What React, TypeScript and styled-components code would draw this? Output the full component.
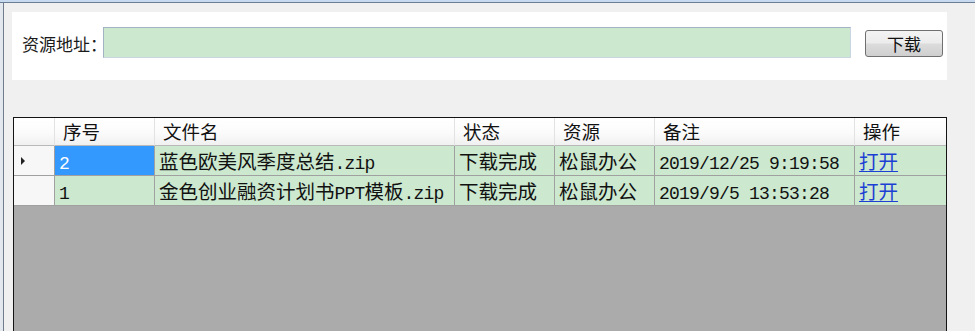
import React from "react";
import styled, { createGlobalStyle } from "styled-components";

const Global = createGlobalStyle`
  html, body { margin: 0; padding: 0; background: #f0f0f0; overflow: hidden; }
  * { box-sizing: border-box; }
`;

const Frame = styled.div`
  width: 975px;
  height: 331px;
  display: flex;
  flex-direction: column;
  background: #f0f0f0;
  overflow: hidden;
`;

const TopEdge = styled.div`
  height: 3px;
  flex: none;
  background: linear-gradient(#c8daf0 0 2px, #6c7d96 2px 3px);
`;

const Body = styled.div`
  flex: 1;
  display: flex;
  min-height: 0;
`;

const SideEdge = styled.div`
  width: 4px;
  flex: none;
  background: linear-gradient(to right, #e3e8ee 0 3px, #6f7c8c 3px 4px);
`;

const Content = styled.div`
  flex: 1;
  display: flex;
  flex-direction: column;
  padding: 9px 29px 0 8px;
  min-height: 0;
`;

const Panel = styled.div`
  height: 68px;
  flex: none;
  background: #ffffff;
  display: flex;
  align-items: flex-start;
  padding: 15px 4px 0 10px;
`;

const Label = styled.div`
  width: 81px;
  height: 31px;
  line-height: 34px;
  font-family: "Noto Sans CJK SC", "Noto Sans", sans-serif;
  font-size: 17px;
  color: #1a1a1a;
  white-space: nowrap;
`;

const UrlInput = styled.div`
  flex: 1;
  height: 31px;
  background: #cce8cf;
  border: 1px solid;
  border-color: #a3b3c3 #c9d6e2 #c9d6e2 #a3b3c3;
`;

const Button = styled.div`
  width: 78px;
  height: 27px;
  margin: 3px 0 0 14px;
  border: 1px solid #707070;
  border-radius: 3px;
  background: linear-gradient(#f3f3f3 0%, #ececec 48%, #dcdcdc 52%, #cfcfcf 100%);
  display: flex;
  align-items: center;
  justify-content: center;
  font-family: "Noto Sans CJK SC", "Noto Sans", sans-serif;
  font-size: 17px;
  color: #111;
`;

const GridBox = styled.div`
  flex: 1;
  margin: 37px 0 0 1px;
  width: 934px;
  border: 1px solid #141414;
  border-bottom: none;
  background: #ababab;
  min-height: 0;
`;

const Table = styled.div`
  display: grid;
  grid-template-columns: 41px 100px 300px 100px 100px 200px 91px;
  grid-template-rows: 28px 30px 30px;
`;

const HeadCell = styled.div<{ $last?: boolean }>`
  background: linear-gradient(#ffffff 0%, #fbfbfb 55%, #f0f0f0 100%);
  border-right: ${(p) => (p.$last ? "none" : "1px solid #e2e2e2")};
  border-bottom: 1px solid #b9b9b9;
  padding-left: 8px;
  font-family: "Noto Sans CJK SC", "Noto Sans", sans-serif;
  font-size: 18.5px;
  line-height: 27px;
  color: #111;
  white-space: nowrap;
  overflow: hidden;
`;

const RowHead = styled.div`
  background: #f7f7f7;
  border-right: 1px solid #a0a0a0;
  border-bottom: 1px solid #a0a0a0;
  display: flex;
  align-items: center;
  padding-left: 7px;
`;

const Arrow = styled.div`
  width: 0;
  height: 0;
  border-top: 4px solid transparent;
  border-bottom: 4px solid transparent;
  border-left: 4px solid #222;
`;

const Cell = styled.div<{ $selected?: boolean; $last?: boolean }>`
  background: ${(p) => (p.$selected ? "#3399ff" : "#cce8cf")};
  color: ${(p) => (p.$selected ? "#ffffff" : "#111111")};
  border-right: ${(p) => (p.$last ? "none" : "1px solid #a0a0a0")};
  border-bottom: 1px solid #a0a0a0;
  padding-left: 4px;
  font-family: "Noto Sans CJK SC", "Noto Sans", sans-serif;
  font-size: 19.5px;
  line-height: 29px;
  white-space: nowrap;
  overflow: hidden;
`;

const Latin = styled.span`
  font-family: "Liberation Mono", "DejaVu Sans Mono", monospace;
  font-size: 18px;
  letter-spacing: -0.8px;
`;

const Link = styled.span`
  color: #1c3fd4;
  text-decoration: underline;
  text-underline-offset: 2px;
`;

function Mixed({ text }: { text: string }) {
  const parts = text.split(/([\u0000-\u00ff]+)/).filter(Boolean);
  return (
    <>
      {parts.map((p, i) =>
        /^[\u0000-\u00ff]+$/.test(p) ? <Latin key={i}>{p}</Latin> : <span key={i}>{p}</span>
      )}
    </>
  );
}

const headers = ["序号", "文件名", "状态", "资源", "备注", "操作"];

const rows = [
  { id: "2", name: "蓝色欧美风季度总结.zip", status: "下载完成", src: "松鼠办公", note: "2019/12/25 9:19:58", current: true },
  { id: "1", name: "金色创业融资计划书PPT模板.zip", status: "下载完成", src: "松鼠办公", note: "2019/9/5 13:53:28", current: false },
];

export default function App() {
  return (
    <Frame>
      <Global />
      <TopEdge />
      <Body>
        <SideEdge />
        <Content>
          <Panel>
            <Label>资源地址：</Label>
            <UrlInput />
            <Button>下载</Button>
          </Panel>
          <GridBox>
            <Table>
              <HeadCell />
              {headers.map((h, i) => (
                <HeadCell key={h} $last={i === headers.length - 1}>
                  {h}
                </HeadCell>
              ))}
              {rows.map((r) => (
                <React.Fragment key={r.id}>
                  <RowHead>{r.current && <Arrow />}</RowHead>
                  <Cell $selected={r.current}>
                    <Mixed text={r.id} />
                  </Cell>
                  <Cell>
                    <Mixed text={r.name} />
                  </Cell>
                  <Cell>{r.status}</Cell>
                  <Cell>{r.src}</Cell>
                  <Cell>
                    <Mixed text={r.note} />
                  </Cell>
                  <Cell $last>
                    <Link>打开</Link>
                  </Cell>
                </React.Fragment>
              ))}
            </Table>
          </GridBox>
        </Content>
      </Body>
    </Frame>
  );
}
